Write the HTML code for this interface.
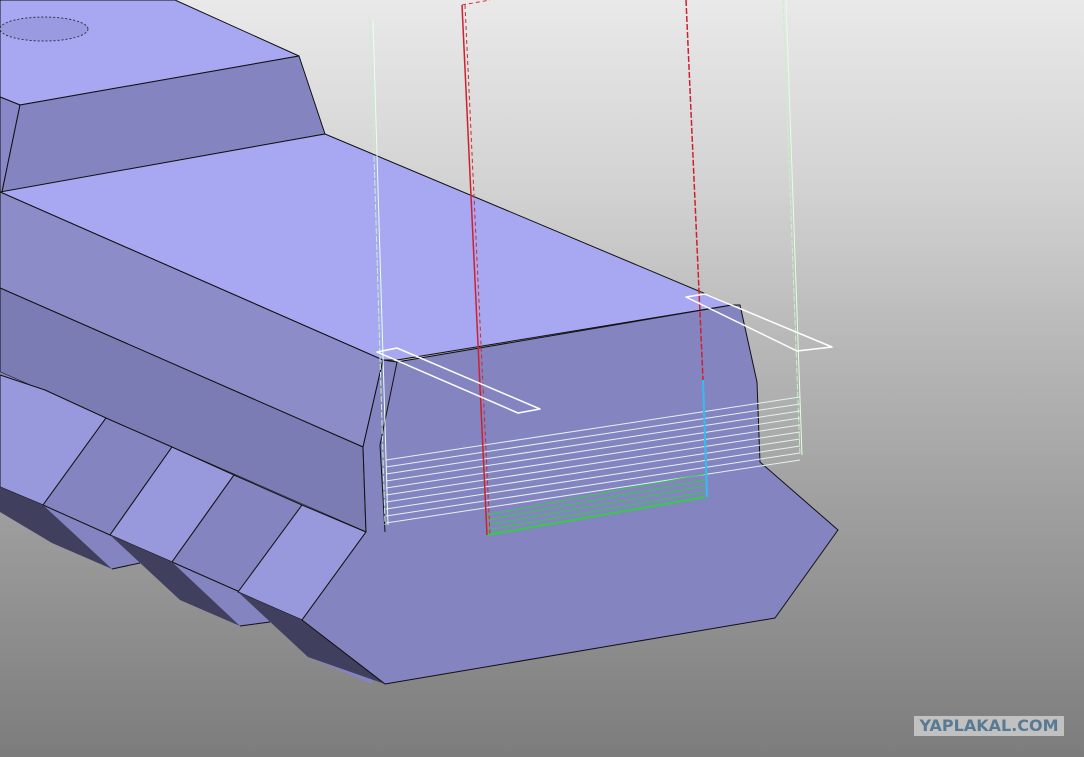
<!DOCTYPE html>
<html><head><meta charset="utf-8"><style>
html,body{margin:0;padding:0;}
body{width:1084px;height:757px;overflow:hidden;background:linear-gradient(#e9e9e9 0%,#d2d2d2 25%,#b8b8b8 45%,#9e9e9e 68%,#7c7c7c 100%);position:relative;font-family:"Liberation Sans",sans-serif;}
svg{position:absolute;left:0;top:0;}
.wm{position:absolute;left:914px;top:716px;width:150px;height:20px;background:rgba(205,205,205,0.85);color:#587a92;font-weight:900;font-size:16px;line-height:20px;text-align:center;letter-spacing:0px;font-family:"DejaVu Sans","Liberation Sans",sans-serif;}
</style></head><body>
<svg width="1084" height="757" viewBox="0 0 1084 757" stroke-linejoin="round">
<polygon points="0,0 175,0 299,56 20,105 0,97" fill="#a8a8f2" stroke="#111" stroke-width="1"/>
<polygon points="0,97 20,105 2,192 0,192" fill="#8888c8" stroke="#111" stroke-width="1"/>
<polygon points="20,105 299,56 325,134 2,192" fill="#8484c0" stroke="#111" stroke-width="1"/>
<ellipse cx="44" cy="29" rx="44" ry="12" fill="#9a9ae0" stroke="#334" stroke-width="1" stroke-dasharray="2,2"/>
<polygon points="0,192 325,134 732,305 397,360 383,360" fill="#a8a8f2" stroke="#111" stroke-width="1"/>
<polygon points="0,192 383,360 363,447 0,288" fill="#8c8cc8" stroke="#111" stroke-width="1"/>
<polygon points="0,288 363,447 366,532 0,372" fill="#7c7cb4" stroke="#111" stroke-width="1"/>
<polygon points="0,372 366,532 372,684 308,657 238,592 270,622 240,626 180,600 110,535 140,563 112,569 52,543 0,510" fill="#8484c0" stroke="none"/>
<polygon points="0,375 45,390 106,418 43,505 0,487" fill="#9898dc" stroke="#111" stroke-width="1"/>
<polygon points="106,418 172,447 110,535 43,505" fill="#8484c0" stroke="#111" stroke-width="1"/>
<polygon points="172,447 234,475 172,562 110,535" fill="#9898dc" stroke="#111" stroke-width="1"/>
<polygon points="234,475 302,505 240,592 172,562" fill="#8484c0" stroke="#111" stroke-width="1"/>
<polygon points="302,505 366,532 302,620 238,592" fill="#9898dc" stroke="#111" stroke-width="1"/>
<polygon points="0,487 43,505 112,569 52,543 0,512" fill="#40405e"/>
<polygon points="110,535 172,562 240,626 180,600" fill="#40405e"/>
<polygon points="238,592 302,620 385,684 308,657" fill="#40405e"/>
<polyline points="112,569 140,563" fill="none" stroke="#111"/>
<polyline points="240,626 270,622" fill="none" stroke="#111"/>
<polygon points="397,362 732,305 740,305 757,382 760,462 838,530 775,618 385,684 302,620 366,532 363,447 383,360" fill="#8484c0" stroke="#111" stroke-width="1"/>
<polyline points="397,362 380,445 385,532" fill="none" stroke="#111"/>
<g stroke="#e0f4f0" stroke-width="1" fill="none">
<line x1="386" y1="460" x2="800" y2="397"/>
<line x1="386" y1="467" x2="800" y2="404"/>
<line x1="386" y1="474" x2="800" y2="411"/>
<line x1="386" y1="481" x2="800" y2="418"/>
<line x1="386" y1="488" x2="800" y2="425"/>
<line x1="386" y1="495" x2="800" y2="432"/>
<line x1="386" y1="502" x2="800" y2="439"/>
<line x1="386" y1="509" x2="800" y2="446"/>
<line x1="386" y1="516" x2="800" y2="453"/>
<line x1="386" y1="523" x2="800" y2="460"/>
</g>
<g stroke="#30d040" stroke-width="1" fill="none">
<line x1="487" y1="515" x2="705" y2="474"/>
<line x1="487" y1="520" x2="705" y2="480"/>
<line x1="487" y1="525" x2="705" y2="486"/>
<line x1="487" y1="530" x2="705" y2="492"/>
<line x1="487" y1="535" x2="705" y2="497" stroke-width="2"/>
</g>
<g fill="none" stroke-width="1">
<polyline points="370,20 385,525" stroke="#c8f0c8" stroke-dasharray="6,2"/>
<polyline points="373,20 388,525" stroke="#e8fff0"/>
<polyline points="783,0 800,455" stroke="#c8f0c8" stroke-dasharray="6,2"/>
<polyline points="786,0 802,455" stroke="#e0ffe0"/>
<polyline points="462,5 487,535" stroke="#d02030" stroke-width="1.5"/>
<polyline points="465,5 490,535" stroke="#c03030" stroke-dasharray="4,3"/>
<polyline points="462,5 490,0" stroke="#d03030" stroke-dasharray="4,3"/>
<polyline points="686,0 703,380" stroke="#d02030" stroke-width="1.5" stroke-dasharray="6,2"/>
<polyline points="703,380 707,497" stroke="#30c0f0" stroke-width="2"/>
</g>
<polygon points="377,352 397,348 540,409 518,413" fill="none" stroke="#fff" stroke-width="1.5"/>
<polygon points="686,297 705,294 832,347 797,351" fill="none" stroke="#fff" stroke-width="1.5"/>
</svg>
<div class="wm">YAPLAKAL.COM</div>
</body></html>
